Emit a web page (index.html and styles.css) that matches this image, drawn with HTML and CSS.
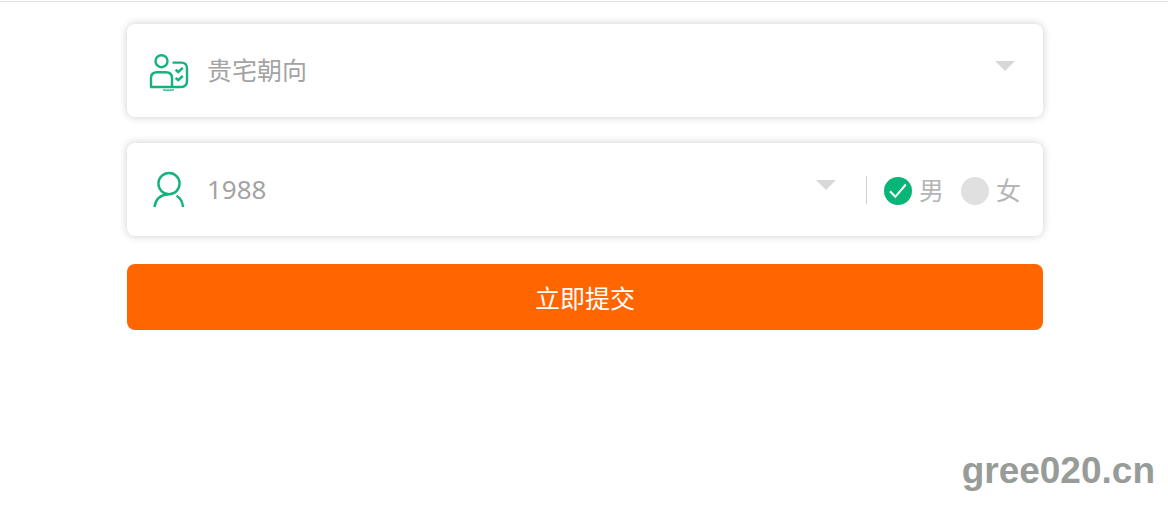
FILE: index.html
```html
<!DOCTYPE html>
<html lang="zh-CN">
<head>
  <meta charset="utf-8">
  <meta name="viewport" content="width=device-width, initial-scale=1">
  <title>贵宅朝向</title>
  <link rel="stylesheet" href="styles.css">
</head>
<body>
  <main class="page">
    <form class="form">
      <div class="card">
        <svg class="icon" viewBox="0 0 40 40" aria-hidden="true">
          <circle cx="12.5" cy="10.2" r="6"/>
          <path d="M2 36V27Q2 21.3 8.2 21.3H16.8Q23 21.3 23 27V36"/>
          <path d="M1 36H32Q38 36 38 30V17.4Q38 11.6 32.4 11.6H23.5"/>
          <path d="M26.6 18.6l2.6 2.4 4.6-4.2M26.6 26.8l2.6 2.4 4.6-4.2"/>
          <path class="thin" d="M14 38.8Q19.5 39.6 25 38.8"/>
        </svg>
        <select class="field" aria-label="贵宅朝向">
          <option>贵宅朝向</option>
        </select>
        <svg class="arrow" viewBox="0 0 20 10" aria-hidden="true"><path d="M0 0H20L10 10Z"/></svg>
      </div>

      <div class="card">
        <svg class="icon" viewBox="0 0 40 40" aria-hidden="true">
          <circle cx="20" cy="13.6" r="10.6"/>
          <path d="M5.5 37Q7 25 19.5 24.2M27.5 25.7Q33.2 29 34 37"/>
        </svg>
        <select class="field number" aria-label="出生年份">
          <option>1988</option>
        </select>
        <svg class="arrow" viewBox="0 0 20 10" aria-hidden="true"><path d="M0 0H20L10 10Z"/></svg>
        <div class="genders">
          <label class="gender">
            <input class="radio" type="radio" name="gender" checked>
            <svg class="dot" viewBox="0 0 28 28" aria-hidden="true"><circle cx="14" cy="14" r="14"/><path d="M6 14.2l5.3 5.6L21.8 7.5"/></svg>
            <span class="name">男</span>
          </label>
          <label class="gender">
            <input class="radio" type="radio" name="gender">
            <svg class="dot" viewBox="0 0 28 28" aria-hidden="true"><circle cx="14" cy="14" r="14"/><path d="M6 14.2l5.3 5.6L21.8 7.5"/></svg>
            <span class="name">女</span>
          </label>
        </div>
      </div>

      <button class="submit" type="button">立即提交</button>
    </form>
    <footer class="mark">gree020.cn</footer>
  </main>
</body>
</html>
```
FILE: styles.css
```css
* {
  box-sizing: border-box;
}

body {
  margin: 0;
  background: #fff;
  font-family: "Noto Sans", "Noto Sans CJK SC", sans-serif;
  font-size: 25px;
}

.page {
  display: flex;
  flex-direction: column;
  min-height: 100vh;
  padding-top: 1px;
}

.form {
  display: flex;
  flex-direction: column;
  gap: 26px;
  padding: 22px 125px 0 127px;
  border-top: 1px solid #e2e2e2;
}

.card {
  display: flex;
  align-items: center;
  min-height: 93px;
  padding: 0 22px;
  border-radius: 8px;
  background: #fff;
  box-shadow: 0 0 8px rgba(0, 0, 0, 0.2);
}

.icon {
  flex: none;
  width: 40px;
  height: 40px;
  fill: none;
  stroke: #14b27c;
  stroke-width: 2.4;
}

.thin {
  stroke-width: 1.2;
}

.field {
  flex: 1;
  min-width: 0;
  height: 58px;
  margin: 0 0 2px 18px;
  padding: 0;
  border: 0;
  background: none;
  color: #a3a3a3;
  font: inherit;
  appearance: none;
}

.number {
  font-size: 26px;
}

.arrow {
  flex: none;
  align-self: flex-start;
  width: 20px;
  height: 10px;
  margin: 37px 6px 0 0;
  fill: #d8d8d8;
}

.genders {
  display: flex;
  align-items: center;
  gap: 17px;
  height: 28px;
  margin-left: 24px;
  padding-left: 17px;
  border-left: 1px solid #d0d0d0;
}

.gender {
  display: flex;
  align-items: center;
  gap: 7px;
  color: #b5b5b5;
}

.name {
  margin-bottom: 2px;
}

.radio {
  position: absolute;
  opacity: 0;
}

.dot {
  width: 28px;
  height: 28px;
  margin-top: 3px;
  fill: #e0e0e0;
}

.dot path {
  display: none;
  fill: none;
  stroke: #fff;
  stroke-width: 2;
}

.radio:checked + .dot {
  fill: #09b577;
}

.radio:checked + .dot path {
  display: block;
}

.submit {
  height: 66px;
  margin-top: 2px;
  padding: 0;
  border: 0;
  border-radius: 8px;
  background: #ff6600;
  color: #fff;
  font: inherit;
}

.mark {
  margin-top: auto;
  padding: 0 13px 12px;
  color: #979c98;
  font: bold 37px/44px "Liberation Sans", sans-serif;
  text-align: right;
}
```
